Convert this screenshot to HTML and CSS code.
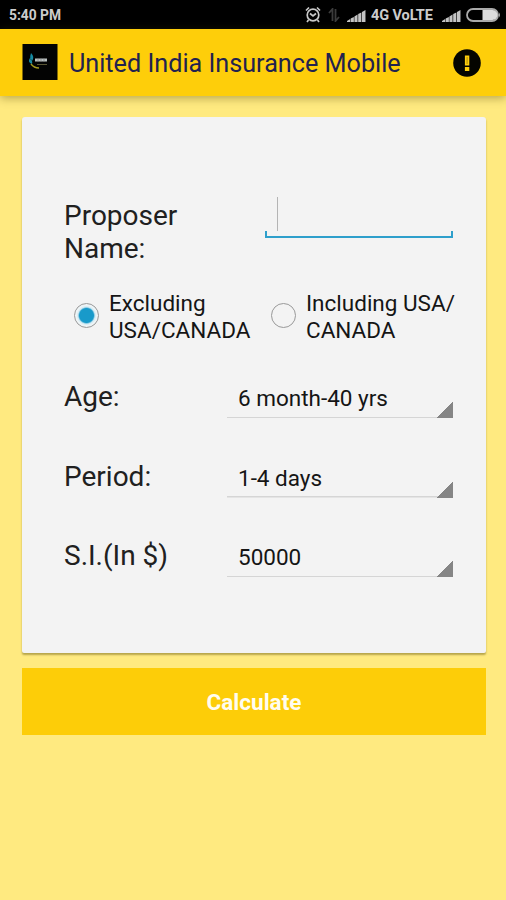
FILE: index.html
```html
<!DOCTYPE html>
<html lang="en">
<head>
<meta charset="utf-8">
<title>United India Insurance Mobile</title>
<link rel="stylesheet" href="styles.css">
</head>
<body>
<div class="status">
  <span class="clock">5:40 PM</span>
  <svg class="alarm" width="16" height="17" viewBox="0 0 16 17" fill="none" stroke="#c8c8c8" stroke-width="1.7"><circle cx="8" cy="9" r="5.8"/><path d="M1 4.5 4 1.5M15 4.5 12 1.5M5 7.5 8 10 11 7.5M3.5 14 2 16M12.500 14 14 16"/></svg>
  <svg class="data" width="12" height="14" viewBox="0 0 12 14" fill="none" stroke="#3c3c3c" stroke-width="1.8"><path d="M4.500 13V1L1 5M7.500 1V13L11 9"/></svg>
  <svg class="signal" width="19" height="12" viewBox="0 0 18 12" preserveAspectRatio="none" fill="#c4c4c4"><path d="M0 12V11L3 9V12ZM3.500 12V8.500L6.500 7V12ZM7 12V6.500L10 4.500V12ZM10.600 12V4L13.600 2.500V12ZM14.200 12V2L17.500 0V12Z"/></svg>
  <span class="network">4G VoLTE</span>
  <svg class="signal second" width="19" height="12" viewBox="0 0 18 12" preserveAspectRatio="none" fill="#c4c4c4"><path d="M0 12V11L3 9V12ZM3.500 12V8.500L6.500 7V12ZM7 12V6.500L10 4.500V12ZM10.600 12V4L13.600 2.500V12ZM14.200 12V2L17.500 0V12Z"/></svg>
  <svg class="battery" width="35" height="14" viewBox="0 0 35 14"><rect x="1" y="1" width="31" height="12" rx="6" fill="#000" stroke="#aaa" stroke-width="1.800"/><path d="M16.500 2H26.500a5 5 0 0 1 0 10H16.500Z" fill="#ddd"/><path d="M33 4.500q2 2.500 0 5" fill="#aaa"/></svg>
</div>
<header class="appbar">
  <svg class="logo" width="36" height="36" viewBox="0 0 36 36"><rect x=".5" width="35" height="36" fill="#030303"/><path d="M9 9q4 4 1 8-3-2-1-8M8 14q-3 4 2 6 1-3-2-6" fill="#168ba3"/><path d="M9 20q3 4 8 4" stroke="#a49a20" stroke-width="1.400" fill="none"/><path d="M13 14.500h12v3h-12z" fill="#bbc1c1"/><path d="M16 14v4M19 14v4M22 14v4" stroke="#777" stroke-width=".6"/><path d="M15 20.500h10" stroke="#575434" stroke-width="1"/></svg>
  <h1>United India Insurance Mobile</h1>
  <svg class="alert" width="28" height="28" viewBox="0 0 28 28"><circle cx="14" cy="14" r="13.800" fill="#050500"/><path d="M11.900 6.500h4.400v10h-4.400zM11.900 18h4.400v4h-4.400z" fill="#fece0a"/><path d="M14.100 8v7" stroke="#a98a10" stroke-width="1"/></svg>
</header>
<main>
  <form class="card">
    <div class="name-row">
      <label class="label">Proposer<br>Name:</label>
      <div class="entry"><span class="caret"></span></div>
    </div>
    <div class="options">
      <div class="option"><span class="radio on"></span><span>Excluding<br>USA/CANADA</span></div>
      <div class="option"><span class="radio"></span><span>Including USA/<br>CANADA</span></div>
    </div>
    <div class="row"><span class="label">Age:</span><div class="spinner">6 month-40 yrs</div></div>
    <div class="row"><span class="label">Period:</span><div class="spinner">1-4 days</div></div>
    <div class="row"><span class="label">S.I.(In $)</span><div class="spinner">50000</div></div>
  </form>
  <button class="calculate" type="button">Calculate</button>
</main>
</body>
</html>
```
FILE: styles.css
```css
* { box-sizing: border-box; }
body {
  margin: 0;
  height: 900px;
  overflow: hidden;
  background: #ffea80;
  font-family: Roboto, sans-serif;
  color: #202020;
}
.status {
  display: flex;
  align-items: center;
  height: 29px;
  padding: 1px 5px 0 9px;
  background: #000;
  color: #ccc;
  font-size: 13.8px;
  font-weight: 700;
}
.status svg { flex: none; }
.clock { margin-right: auto; }
.network { width: 63px; font-size: 14.5px; letter-spacing: -.1px; white-space: nowrap; }
.status .alarm { margin-top: -2px; }
.data { margin-left: 7px; }
.signal { margin: 1px 5px 0 7px; }
.signal.second { margin: 1px 5px 0 8px; }
.appbar {
  display: flex;
  align-items: center;
  height: 67px;
  padding: 0 25px 0 22px;
  background: #fece0a;
  box-shadow: 0 2px 9px rgba(80, 70, 0, .42);
}
.logo { margin-top: -1px; }
h1 {
  margin: 2px auto 0 11px;
  font-size: 25.2px;
  font-weight: 400;
  line-height: 32px;
  color: #22224f;
  white-space: nowrap;
}
main { padding: 21px 20px 0 22px; }
.card {
  height: 536px;
  padding: 81px 33px 0 42px;
  background: #f3f3f3;
  border-radius: 3px 3px 2px 2px;
  box-shadow: 0 2px 2px rgba(80, 70, 0, .42);
}
.name-row { display: flex; justify-content: space-between; height: 92px; }
.label { font-size: 28px; line-height: 33px; white-space: nowrap; }
.name-row .label { padding-top: 1px; }
.entry {
  width: 188px;
  height: 40px;
  border-bottom: 2px solid #2e9fcb;
  background:
    linear-gradient(#2e9fcb, #2e9fcb) left bottom / 2px 5px no-repeat,
    linear-gradient(#2e9fcb, #2e9fcb) right bottom / 2px 5px no-repeat;
}
.caret { display: block; width: 1px; height: 34px; margin: -1px 0 0 12px; background: #b4b4b4; }
.options { display: flex; height: 90px; padding-left: 10px; }
.option {
  display: flex;
  flex: none;
  width: 197px;
  font-size: 22.500px;
  line-height: 26.5px;
  color: #151515;
  white-space: nowrap;
}
.radio {
  flex: none;
  width: 25px;
  height: 25px;
  margin: 13px 10px 0 0;
  border: 1.500px solid #999;
  border-radius: 50%;
}
.radio.on { background: radial-gradient(circle, #189aca 7px, #cfe9f3 8.500px, #eef4f6 10px); }
.row { display: flex; justify-content: space-between; height: 79.500px; }
.spinner {
  width: 226px;
  height: 38px;
  padding: 4px 0 0 11px;
  background:
    linear-gradient(135deg, transparent 50%, #858585 51%) right bottom / 17px 17px no-repeat,
    linear-gradient(#d5d5d5, #d5d5d5) left bottom / 100% 1.500px no-repeat;
  font-size: 22.500px;
  line-height: 28px;
  color: #151515;
}
.calculate {
  display: block;
  width: 464px;
  height: 67px;
  margin-top: 15px;
  padding: 0;
  border: 0;
  background: #fdcd08;
  color: #fffdf0;
  font: 700 22.500px Roboto, sans-serif;
}
```
